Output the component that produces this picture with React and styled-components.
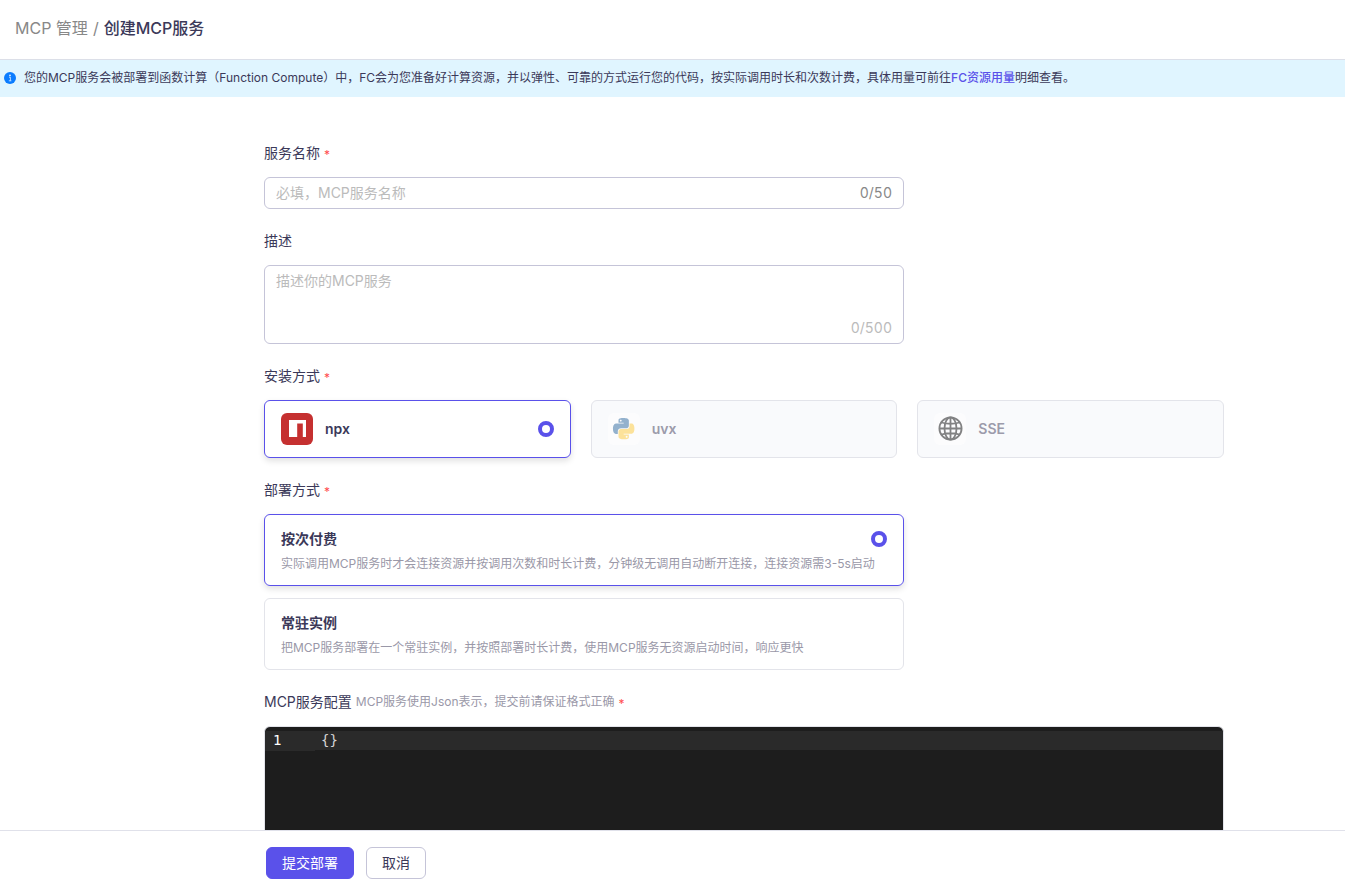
import { useState } from "react";
import styled, { createGlobalStyle } from "styled-components";

const GlobalStyle = createGlobalStyle`
  * {
    box-sizing: border-box;
  }

  body {
    margin: 0;
    color: #3b3959;
    background-color: #fff;
    font-family: Inter, "Noto Sans CJK SC", sans-serif;
    font-size: 14px;
    line-height: 20px;
  }

  button, input, textarea {
    font: inherit;
    color: inherit;
  }
`;

const Page = styled.div`
  display: flex;
  flex-direction: column;
  height: 100vh;
`;

const Header = styled.header`
  flex: none;
  padding: 16px 15px 19px;
  border-bottom: 1px solid #dcdfe8;
`;

const Breadcrumb = styled.nav`
  display: flex;
  gap: 5px;
  font-size: 16px;
  line-height: 24px;
  color: #888;
`;

const BreadcrumbLink = styled.a`
  color: inherit;
  text-decoration: none;
`;

const Current = styled.span`
  color: #3b3959;
  font-weight: 500;
`;

const Notice = styled.div`
  flex: none;
  display: flex;
  align-items: center;
  gap: 8px;
  min-height: 37px;
  padding: 0 4px 2px;
  background-color: #e0f5ff;
  font-size: 12px;
  line-height: 18px;
`;

const NoticeText = styled.p`
  margin: 0;
`;

const NoticeLink = styled.a`
  color: #5a51ea;
  font-weight: 500;
  text-decoration: none;
`;

const Main = styled.main`
  flex: 1;
  min-height: 0;
  overflow: auto;
  scrollbar-width: none;
  padding: 46px 121px 0 264px;
`;

const Form = styled.form`
  display: flex;
  flex-direction: column;
  gap: 22px;
`;

const Field = styled.div`
  display: flex;
  flex-direction: column;
  gap: 14px;
  width: 100%;
  max-width: ${(props) => (props.$wide ? "none" : "640px")};
`;

const Label = styled.label`
  display: flex;
  align-items: center;
  gap: 4px;
`;

const Hint = styled.span`
  color: #9a98a8;
  font-size: 12px;
`;

const Required = styled.span`
  color: #ff4d4f;
  font-size: 12px;
  line-height: 12px;
  padding-top: 4px;
`;

const InputBox = styled.div`
  display: flex;
  flex-direction: ${(props) => (props.$column ? "column" : "row")};
  align-items: ${(props) => (props.$column ? "stretch" : "center")};
  min-height: ${(props) => (props.$column ? "79px" : "32px")};
  padding: ${(props) => (props.$column ? "5px 11px" : "0 11px")};
  border: 1px solid #c5c4d8;
  border-radius: 6px;
`;

const TextInput = styled.input`
  flex: 1;
  min-width: 0;
  height: 30px;
  padding: 0 0 2px;
  border: none;
  outline: none;
  background: transparent;

  &::placeholder {
    color: #bbb;
  }
`;

const TextArea = styled.textarea`
  flex: 1;
  padding: 0;
  border: none;
  outline: none;
  resize: none;
  background: transparent;

  &::placeholder {
    color: #bbb;
  }
`;

const Counter = styled.span`
  color: ${(props) => (props.$light ? "#bbb" : "#888")};
  font-variant-numeric: tabular-nums;
  text-align: right;
`;

const InstallGrid = styled.div`
  display: grid;
  grid-template-columns: repeat(3, minmax(0, 1fr));
  gap: 20px;
`;

const InstallCard = styled.label`
  display: flex;
  align-items: center;
  gap: 12px;
  height: 58px;
  padding: 0 16px;
  border: 1px solid ${(props) => (props.$active ? "#5a51ea" : "#e3e4ea")};
  border-radius: 6px;
  background-color: ${(props) => (props.$active ? "#fff" : "#f9fafc")};
  box-shadow: ${(props) => (props.$active ? "0 3px 6px rgba(0, 0, 0, 0.12)" : "none")};
  cursor: pointer;
`;

const InstallIcon = styled.svg`
  flex: none;
  width: 32px;
  height: 32px;
  border-radius: 6px;
  opacity: ${(props) => (props.$active ? 1 : 0.5)};
`;

const InstallName = styled.span`
  flex: 1;
  font-weight: 600;
  color: ${(props) => (props.$active ? "#3b3959" : "#9c9bab")};
`;

const Radio = styled.input`
  appearance: none;
  flex: none;
  width: 16px;
  height: 16px;
  margin: 0;
  border: 4px solid #5a51ea;
  border-radius: 50%;
  background-color: #fff;
  opacity: 0;

  &:checked {
    opacity: 1;
  }
`;

const DeployList = styled.div`
  display: flex;
  flex-direction: column;
  gap: 12px;
`;

const DeployCard = styled.label`
  display: flex;
  flex-direction: column;
  gap: 6px;
  min-height: 72px;
  padding: 14px 16px 12px;
  border: 1px solid ${(props) => (props.$active ? "#5a51ea" : "#e3e4ea")};
  border-radius: 6px;
  box-shadow: ${(props) => (props.$active ? "0 3px 6px rgba(0, 0, 0, 0.12)" : "none")};
  cursor: pointer;
`;

const DeployTitle = styled.span`
  display: flex;
  align-items: center;
  justify-content: space-between;
  font-weight: 600;
`;

const DeployText = styled.span`
  color: #9a98a8;
  font-size: 12px;
  line-height: 18px;
`;

const Editor = styled.div`
  display: flex;
  height: 300px;
  padding-top: 4px;
  border: 1px solid #e3e4ea;
  border-radius: 6px;
  background-color: #1d1d1d;
  font-family: "DejaVu Sans Mono", monospace;
  line-height: 19px;
  overflow: hidden;
`;

const Gutter = styled.div`
  flex: none;
  width: 50px;
`;

const LineNumber = styled.div`
  height: 20px;
  padding-left: 8px;
  color: #fff;
  background-color: #2a2a2a;
`;

const Code = styled.textarea`
  flex: 1;
  padding: 0 6px;
  border: none;
  outline: none;
  resize: none;
  color: #d4d4d4;
  background: linear-gradient(#2a2a2a, #2a2a2a) no-repeat 0 0 / 100% 19px;
`;

const Footer = styled.footer`
  flex: none;
  display: flex;
  gap: 12px;
  padding: 16px 266px 6px;
  border-top: 1px solid #e0e1ea;
  background-color: #fff;
`;

const Button = styled.button`
  height: 32px;
  padding: 0 15px;
  border: 1px solid ${(props) => (props.$primary ? "#5a51ea" : "#c5c4d8")};
  border-radius: 6px;
  color: ${(props) => (props.$primary ? "#fff" : "#3b3959")};
  background-color: ${(props) => (props.$primary ? "#5a51ea" : "#fff")};
  cursor: pointer;
`;

const InfoIcon = () => (
  <svg width="12" height="12" viewBox="0 0 12 12" aria-hidden="true">
    <circle cx="6" cy="6" r="6" fill="#0a7cff" />
    <circle cx="6" cy="3.4" r="0.8" fill="#fff" />
    <path d="M5 5.2h1.4v3.4M4.8 8.8h2.6" fill="none" stroke="#fff" strokeWidth="0.7" />
  </svg>
);

const NpxIcon = () => (
  <>
    <rect width="32" height="32" fill="#c53030" />
    <path d="M8 7h17v17h-3.2V10.4h-5.6V24H8z" fill="#fff" />
  </>
);

const PythonIcon = () => (
  <>
    <rect width="32" height="32" fill="#fff" />
    <g transform="translate(5 5) scale(0.89)">
      <path
        fill="#2f6a9f"
        d="M14.25.18l.9.2.73.26.59.3.45.32.34.34.25.34.16.33.1.3.04.26.02.2-.01.13V8.5l-.05.63-.13.55-.21.46-.26.38-.3.31-.33.25-.35.19-.35.14-.33.1-.3.07-.26.04-.21.02H8.77l-.69.05-.59.14-.5.22-.41.27-.33.32-.27.35-.2.36-.15.37-.1.35-.07.32-.04.27-.02.21v3.06H3.17l-.21-.03-.28-.07-.32-.12-.35-.18-.36-.26-.36-.36-.35-.46-.32-.59-.28-.73-.21-.88-.14-1.05-.05-1.23.06-1.22.16-1.04.24-.87.32-.71.36-.57.4-.44.42-.33.42-.24.4-.16.36-.1.32-.05.24-.01h.16l.06.01h8.16v-.83H6.18l-.01-2.75-.02-.37.05-.34.11-.31.17-.28.25-.26.31-.23.38-.2.44-.18.51-.15.58-.12.64-.1.71-.06.77-.04.84-.02 1.27.05zm-6.3 1.98l-.23.33-.08.41.08.41.23.34.33.22.41.09.41-.09.33-.22.23-.34.08-.41-.08-.41-.23-.33-.33-.22-.41-.09-.41.09z"
      />
      <path
        fill="#ffcb3a"
        d="M21.04 6.11l.28.06.32.12.35.18.36.27.36.35.35.47.32.59.28.73.21.88.14 1.04.05 1.23-.06 1.23-.16 1.04-.24.86-.32.71-.36.57-.4.45-.42.33-.42.24-.4.16-.36.09-.32.05-.24.02-.16-.01h-8.22v.82h5.84l.01 2.76.02.36-.05.34-.11.31-.17.29-.25.25-.31.24-.38.2-.44.17-.51.15-.58.13-.64.09-.71.07-.77.04-.84.01-1.27-.04-1.07-.14-.9-.2-.73-.25-.59-.3-.45-.33-.34-.34-.25-.34-.16-.33-.1-.3-.04-.25-.02-.2.01-.13v-5.34l.05-.64.13-.54.21-.46.26-.38.3-.32.33-.24.35-.2.35-.14.33-.1.3-.06.26-.04.21-.02.13-.01h5.84l.69-.05.59-.14.5-.21.41-.28.33-.32.27-.35.2-.36.15-.36.1-.35.07-.32.04-.28.02-.21V6.07h2.09zm-6.47 14.25l-.23.33-.08.41.08.41.23.33.33.23.41.08.41-.08.33-.23.23-.33.08-.41-.08-.41-.23-.33-.33-.23-.41-.08-.41.08z"
      />
    </g>
  </>
);

const GlobeIcon = () => (
  <>
    <rect width="32" height="32" fill="#fff" />
    <g fill="none" stroke="#0d0d0d" strokeWidth="1.8">
      <circle cx="16.5" cy="15.5" r="11.1" />
      <ellipse cx="16.5" cy="15.5" rx="6" ry="11.1" />
      <path d="M16.5 4.5v22M5.5 15.5h22M7.5 9.5Q16.5 12 25.5 9.5M7.5 21.5Q16.5 19 25.5 21.5" />
    </g>
  </>
);

const installOptions = [
  { value: "npx", Icon: NpxIcon },
  { value: "uvx", Icon: PythonIcon },
  { value: "SSE", Icon: GlobeIcon },
];

const deployOptions = [
  {
    value: "按次付费",
    text: "实际调用MCP服务时才会连接资源并按调用次数和时长计费，分钟级无调用自动断开连接，连接资源需3-5s启动",
  },
  {
    value: "常驻实例",
    text: "把MCP服务部署在一个常驻实例，并按照部署时长计费，使用MCP服务无资源启动时间，响应更快",
  },
];

const App = () => {
  const [name, setName] = useState("");
  const [description, setDescription] = useState("");
  const [install, setInstall] = useState("npx");
  const [deploy, setDeploy] = useState("按次付费");
  const [config, setConfig] = useState("{}");

  return (
    <Page lang="zh-CN">
      <GlobalStyle />
      <Header>
        <Breadcrumb>
          <BreadcrumbLink href="#mcp">MCP 管理</BreadcrumbLink>
          <span>/</span>
          <Current>创建MCP服务</Current>
        </Breadcrumb>
      </Header>
      <Notice>
        <InfoIcon />
        <NoticeText>
          您的MCP服务会被部署到函数计算（Function Compute）中，FC会为您准备好计算资源，并以弹性、可靠的方式运行您的代码，按实际调用时长和次数计费，具体用量可前往
          <NoticeLink href="#usage">FC资源用量</NoticeLink>
          明细查看。
        </NoticeText>
      </Notice>

      <Main>
        <Form id="mcp-form" onSubmit={(e) => e.preventDefault()}>
          <Field>
            <Label htmlFor="name">
              服务名称<Required>*</Required>
            </Label>
            <InputBox>
              <TextInput
                id="name"
                maxLength={50}
                placeholder="必填，MCP服务名称"
                value={name}
                onChange={(e) => setName(e.target.value)}
              />
              <Counter>{name.length}/50</Counter>
            </InputBox>
          </Field>

          <Field>
            <Label htmlFor="description">描述</Label>
            <InputBox $column>
              <TextArea
                id="description"
                rows={2}
                maxLength={500}
                placeholder="描述你的MCP服务"
                value={description}
                onChange={(e) => setDescription(e.target.value)}
              />
              <Counter $light>{description.length}/500</Counter>
            </InputBox>
          </Field>

          <Field $wide role="radiogroup" aria-labelledby="install-label">
            <Label as="div" id="install-label">
              安装方式<Required>*</Required>
            </Label>
            <InstallGrid>
              {installOptions.map(({ value, Icon }) => (
                <InstallCard key={value} $active={install === value}>
                  <InstallIcon viewBox="0 0 32 32" aria-hidden="true" $active={install === value}>
                    <Icon />
                  </InstallIcon>
                  <InstallName $active={install === value}>{value}</InstallName>
                  <Radio
                    type="radio"
                    name="install"
                    checked={install === value}
                    onChange={() => setInstall(value)}
                  />
                </InstallCard>
              ))}
            </InstallGrid>
          </Field>

          <Field role="radiogroup" aria-labelledby="deploy-label">
            <Label as="div" id="deploy-label">
              部署方式<Required>*</Required>
            </Label>
            <DeployList>
              {deployOptions.map(({ value, text }) => (
                <DeployCard key={value} $active={deploy === value}>
                  <DeployTitle>
                    {value}
                    <Radio
                      type="radio"
                      name="deploy"
                      checked={deploy === value}
                      onChange={() => setDeploy(value)}
                    />
                  </DeployTitle>
                  <DeployText>{text}</DeployText>
                </DeployCard>
              ))}
            </DeployList>
          </Field>

          <Field $wide>
            <Label htmlFor="config">
              MCP服务配置
              <Hint>MCP服务使用Json表示，提交前请保证格式正确</Hint>
              <Required>*</Required>
            </Label>
            <Editor>
              <Gutter>
                <LineNumber>1</LineNumber>
              </Gutter>
              <Code
                id="config"
                spellCheck={false}
                value={config}
                onChange={(e) => setConfig(e.target.value)}
              />
            </Editor>
          </Field>
        </Form>
      </Main>

      <Footer>
        <Button type="submit" form="mcp-form" $primary>
          提交部署
        </Button>
        <Button type="button">取消</Button>
      </Footer>
    </Page>
  );
};

export default App;
